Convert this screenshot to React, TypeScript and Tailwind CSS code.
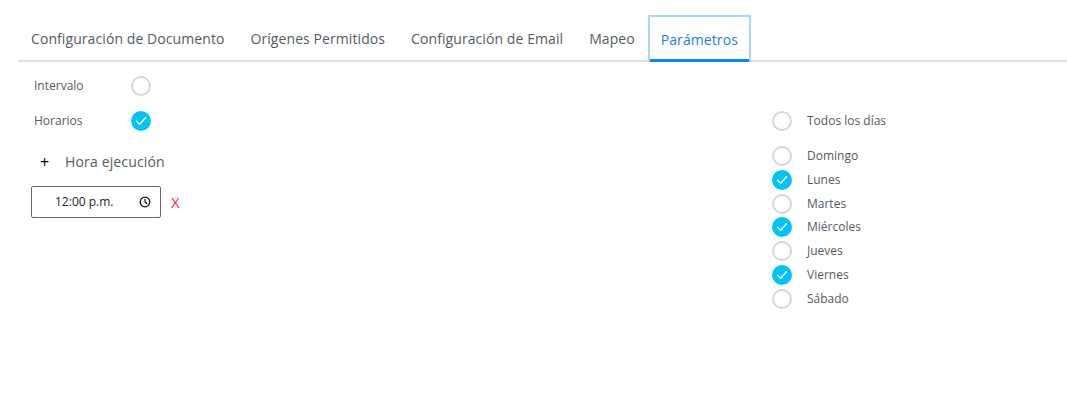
import React from "react";

const Radio = ({ checked }: { checked?: boolean }) =>
  checked ? (
    <span className="flex h-[20px] w-[20px] items-center justify-center rounded-full bg-[#00c4f5]">
      <svg width="12" height="10" viewBox="0 0 12 10" fill="none">
        <path d="M1.5 5.2 L4.6 8.2 L10.5 1.8" stroke="white" strokeWidth="1.4" strokeLinecap="round" strokeLinejoin="round" />
      </svg>
    </span>
  ) : (
    <span className="block h-[20px] w-[20px] rounded-full border-2 border-[#d3d7dc] bg-white" />
  );

const tabs = [
  "Configuración de Documento",
  "Orígenes Permitidos",
  "Configuración de Email",
  "Mapeo",
];

const days: [string, boolean][] = [
  ["Domingo", false],
  ["Lunes", true],
  ["Martes", false],
  ["Miércoles", true],
  ["Jueves", false],
  ["Viernes", true],
  ["Sábado", false],
];

export default function App() {
  return (
    <div
      className="h-[407px] w-[1067px] bg-white text-[#555b61]"
      style={{ fontFamily: '"Open Sans", sans-serif' }}
    >
      <div className="pl-[18px] pt-[15px]">
        <div className="flex border-b-2 border-[#dee2e6]">
          {tabs.map((t) => (
            <div
              key={t}
              className="mb-[-2px] flex h-[47px] items-center px-[13px] text-[14px] tracking-[0.08px] text-[#555b61]"
            >
              {t}
            </div>
          ))}
          <div className="mb-[-2px] flex h-[47px] items-center border-2 border-b-0 border-[#a8d5fb] px-[11px] text-[14px] tracking-[0.08px] text-[#1a7fe0] shadow-[inset_0_-3px_0_#0a84ff]">
            Parámetros
          </div>
        </div>
      </div>
      <div className="flex pt-[14.4px]">
        <div className="w-[772px] pl-[31px]">
          <div className="flex h-[20px] items-center">
            <span className="w-[100px] pl-[3px] text-[12px]">Intervalo</span>
            <Radio />
          </div>
          <div className="mt-[15px] flex h-[20px] items-center">
            <span className="w-[100px] pl-[3px] text-[12px]">Horarios</span>
            <Radio checked />
          </div>
          <div className="mt-[20.6px] flex h-[20px] items-center">
            <span className="w-[34px] pl-[9px] text-[16px] leading-none text-black">+</span>
            <span className="text-[14px] tracking-[0.15px]">Hora ejecución</span>
          </div>
          <div className="mt-[14px] flex items-center">
            <div className="flex h-[32px] w-[130px] items-center rounded-[2px] border border-[#6b6b6b] pl-[23px] pr-[9px] text-[12px] text-[#222]">
              <span className="flex-1">12:00 p.m.</span>
              <svg width="12" height="12" viewBox="0 0 12 12" fill="none">
                <circle cx="6" cy="6" r="4.8" stroke="#111" strokeWidth="1.3" />
                <path d="M6 3.3 V6 L7.8 7.5" stroke="#111" strokeWidth="1.2" strokeLinecap="round" />
              </svg>
            </div>
            <span className="ml-[10px] text-[15px] text-[#ff1f4f]">X</span>
          </div>
        </div>
        <div className="pt-[35px]">
          <div className="flex h-[20px] items-center">
            <Radio />
            <span className="ml-[15px] text-[12px]">Todos los días</span>
          </div>
          <div className="mt-[15px] flex flex-col gap-[3.7px]">
            {days.map(([d, c]) => (
              <div key={d} className="flex h-[20px] items-center">
                <Radio checked={c} />
                <span className="ml-[15px] text-[12px]">{d}</span>
              </div>
            ))}
          </div>
        </div>
      </div>
    </div>
  );
}
